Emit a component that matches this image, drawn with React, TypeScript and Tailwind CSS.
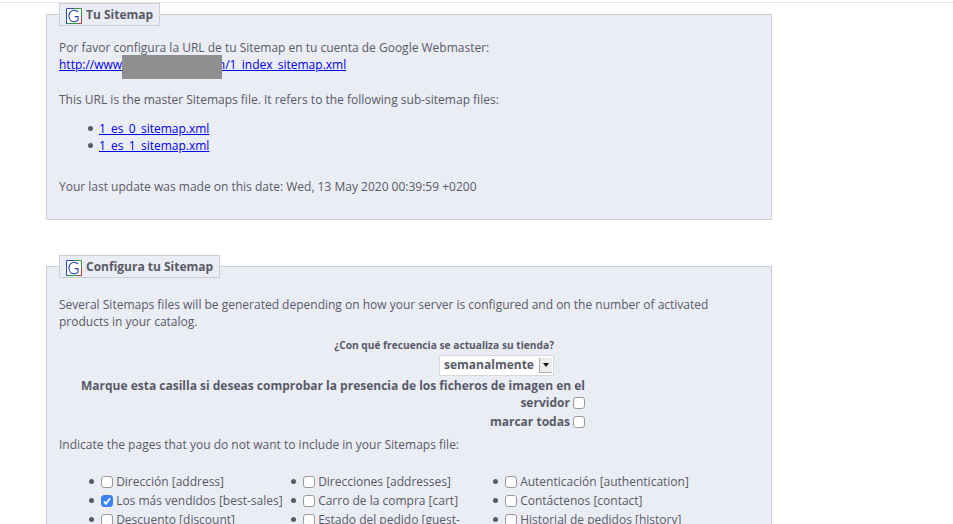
import React from "react";

const font = "font-['Open_Sans',sans-serif]";

const GLogo = () => (
  <svg width="16" height="16" viewBox="0 0 16 16" className="mt-[3px] shrink-0">
    <rect width="16" height="16" fill="#fff" />
    <path d="M.5 16V.5H8" fill="none" stroke="#2a4fb5" />
    <path d="M8 .5H15.5V8" fill="none" stroke="#2f9a3a" />
    <path d="M15.5 8V15.5H12" fill="none" stroke="#c0392b" />
    <path d="M12 15.5H1" fill="none" stroke="#2f9a3a" />
    <path
      d="M12.2 4.2C11.2 2.9 9.7 2.2 8.2 2.2C5.2 2.2 3 4.7 3 8C3 11.3 5.1 13.8 8.1 13.8C9.6 13.8 10.9 13.3 12 12.4V8.6H8.8"
      fill="none"
      stroke="#1f3fae"
      strokeWidth="1.1"
    />
  </svg>
);

const Legend = ({ title }: { title: string }) => (
  <legend className="flex h-[23px] items-center gap-[4px] border border-[#ccced7] bg-[#ebedf4] pl-[6px] pr-[6px] text-[12px] font-bold text-[#585a69]">
    <GLogo />
    {title}
  </legend>
);

const Check = ({ checked = false }: { checked?: boolean }) => (
  <span
    className={`relative top-[2px] inline-block h-[12px] w-[12px] rounded-[3px] border align-baseline ${
      checked ? "border-[#3b82f6] bg-[#3b82f6]" : "border-[#9a9a9a] bg-white"
    }`}
  >
    <input type="checkbox" defaultChecked={checked} className="absolute inset-0 appearance-none" />
    {checked && (
      <svg viewBox="0 0 12 12" className="pointer-events-none absolute inset-[-1px] h-[12px] w-[12px]">
        <path d="M3 6.4L5 8.8L9 3.2" fill="none" stroke="#fff" strokeWidth="1.7" />
      </svg>
    )}
  </span>
);

const bullet =
  "relative before:absolute before:top-[6px] before:h-[5px] before:w-[5px] before:rounded-full before:bg-[#585a69] before:content-['']";

const pages: { label: string; checked?: boolean }[] = [
  { label: "Dirección [address]" },
  { label: "Direcciones [addresses]" },
  { label: "Autenticación [authentication]" },
  { label: "Los más vendidos [best-sales]", checked: true },
  { label: "Carro de la compra [cart]" },
  { label: "Contáctenos [contact]" },
  { label: "Descuento [discount]" },
  { label: "Estado del pedido [guest-tracking]" },
  { label: "Historial de pedidos [history]" },
];

export default function App() {
  return (
    <div className={`${font} h-[524px] overflow-hidden bg-white text-[12px] leading-[17px] text-[#585a69]`}>
      <div className="h-[3px] border-b border-[#e5e5e5]" />
      <div className="ml-[46px] w-[726px]">
        <fieldset className="h-[217px] border border-[#ccced7] bg-[#ebedf4] px-[12px]">
          <Legend title="Tu Sitemap" />
          <p className="mt-[13px]">Por favor configura la URL de tu Sitemap en tu cuenta de Google Webmaster:</p>
          <a href="#" className="text-[#0000ee] underline">
            http://www
            <span className="relative inline-block w-[92px]">
              <span className="absolute left-0 top-[-14px] z-10 h-[24px] w-[100px] bg-[#8f8f8f]" />
            </span>
            m/1_index_sitemap.xml
          </a>
          <p className="mt-[18px]">This URL is the master Sitemaps file. It refers to the following sub-sitemap files:</p>
          <ul className="mt-[12px] pl-[40px]">
            <li className={`${bullet} before:left-[-11px]`}><a href="#" className="text-[#0000ee] underline">1_es_0_sitemap.xml</a></li>
            <li className={`${bullet} before:left-[-11px]`}><a href="#" className="text-[#0000ee] underline">1_es_1_sitemap.xml</a></li>
          </ul>
          <p className="mt-[24px]">Your last update was made on this date: Wed, 13 May 2020 00:39:59 +0200</p>
        </fieldset>

        <fieldset className="mt-[35px] border border-[#ccced7] bg-[#ebedf4] px-[12px]">
          <Legend title="Configura tu Sitemap" />
          <p className="mt-[18px]">
            Several Sitemaps files will be generated depending on how your server is configured and on the number of activated products in your catalog.
          </p>
          <div className="mt-[7px] w-[495px] text-right text-[10.2px] font-bold">¿Con qué frecuencia se actualiza su tienda?</div>
          <div className="flex w-[495px] justify-end">
            <div className="relative mt-[1px] h-[21px] w-[115px] border border-[#d8d8d8] bg-white">
              <select className="h-full w-full appearance-none bg-transparent pb-[2px] pl-[4px] text-[12px] font-bold outline-none">
                <option>semanalmente</option>
              </select>
              <span className="pointer-events-none absolute right-[1px] top-[2px] flex h-[15px] w-[13px] items-center justify-center border-b border-l border-[#a9a9a9] bg-[#ececec]">
                <span className="h-0 w-0 border-x-[3px] border-t-[4px] border-x-transparent border-t-[#111]" />
              </span>
            </div>
          </div>
          <div className="mt-[1px] w-[526px] pl-[18px] text-right font-bold">
            <div>
              Marque esta casilla si deseas comprobar la presencia de los ficheros de imagen en el servidor <Check />
            </div>
            <div className="mt-[2px]">marcar todas <Check /></div>
          </div>
          <p className="mt-[6px]">Indicate the pages that you do not want to include in your Sitemaps file:</p>
          <ul className="mt-[20px] grid w-[606px] grid-cols-[202px_202px_202px] gap-y-[2px] pl-[42px]">
            {pages.map((page) => (
              <li key={page.label} className={`${bullet} before:left-[-12px]`}>
                <Check checked={page.checked} /> {page.label}
              </li>
            ))}
          </ul>
          <div className="h-[40px]" />
        </fieldset>
      </div>
    </div>
  );
}
